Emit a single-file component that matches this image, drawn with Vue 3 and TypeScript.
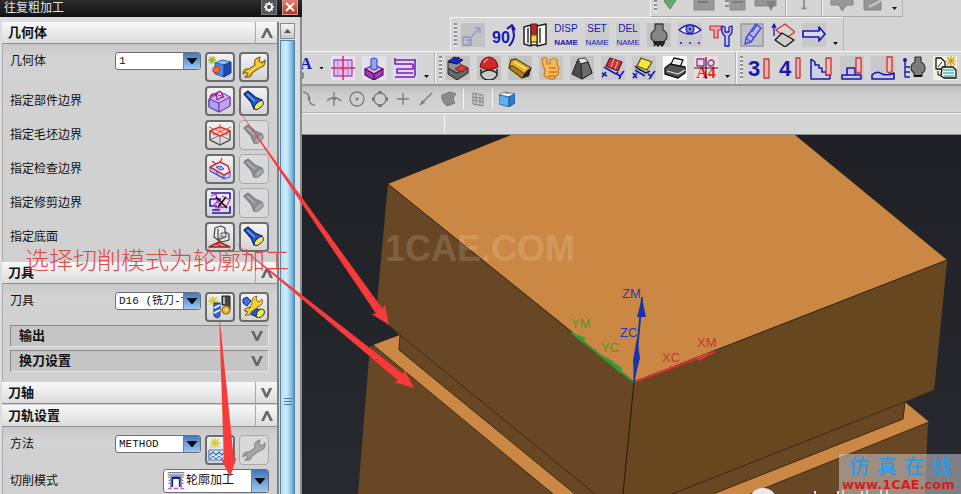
<script setup lang="ts">
import { h, ref } from 'vue'
import type { FunctionalComponent, VNode } from 'vue'

type Shape = () => VNode

const P = (d: string, fill = 'none', stroke = 'none', w = 1): Shape => () =>
  h('path', { d, fill, stroke, 'stroke-width': w, 'stroke-linejoin': 'round' })
const C = (cx: number, cy: number, r: number, fill = 'none', stroke = 'none', w = 1): Shape => () =>
  h('circle', { cx, cy, r, fill, stroke, 'stroke-width': w })
const T = (text: string, x: number, y: number, size: number, fill: string, weight = 400, family = 'Liberation Sans, sans-serif'): Shape => () =>
  h('text', { x, y, fill, 'font-size': size, 'font-weight': weight, 'font-family': family, 'text-anchor': 'middle' }, text)
const bg = (color = '#c3c3c3'): Shape => P('M0 0h24v24H0z', color)

const navy = '#1717b8'
const red = '#d03030'

const torch = (body: string, dark: string, lens: string): Shape[] => [
  P('M2 5L6 2 13 8 20 11 12 20 9 13Z', body, dark, 1.2),
  P('M5 5L13 12', 'none', lens === '#f6ec48' ? '#6fa8ff' : '#b4b7bc', 1.6),
  P('M20 11Q23 15 19 18Q15 22 12 20Q12 17 14 15Q17 12 20 11Z', lens, dark, 1),
]
const wrench = (fill: string, edge: string): Shape[] => [
  P('M13 10Q11 4 18 2L17 6 20 8 23 5Q24 11 17 13L10 18Q9 23 3 22L6 19 4 17 1 19Q1 14 7 14Z', fill, edge, 1.3),
]

const icons: Record<string, Shape[]> = {
  cube: [
    P('M7 8L14 5 23 7 16 10Z', '#8cc0ff', '#2c5fb8'),
    P('M7 8L16 10V22L7 19Z', '#4b8af0', '#2c5fb8'),
    P('M16 10L23 7V18L16 22Z', '#1a4cb4', '#173c90'),
    P('M5 13L10 11 12 14 10 18 5 17Z', '#ef7030', '#b04515'),
    P('M4 1V9M0 5H8M1 2L7 8M7 2L1 8', 'none', '#a4b820', 1.3),
  ],
  wrench: wrench('#f4cf38', '#8a6a10'),
  wrenchOff: wrench('#a6a6a2', '#8f8f8b'),
  torch: torch('#1e57cf', '#12245c', '#f6ec48'),
  torchOff: torch('#8b8f97', '#7b7f86', '#a4a7ac'),
  part: [
    P('M1 10L9 5 12 7 15 4 22 8V17L11 23 1 18Z', '#d6b4f0', '#6a35a8'),
    P('M1 10L11 14V23L1 18Z', '#a9a2f2', '#5538a8'),
    P('M11 14L22 8V17L11 23Z', '#c9a0ee', '#5f38b0'),
    P('M2 9Q3 4 7 5Q9 7 9 11M8 7Q9 2 13 3Q15 5 15 9M3 7L12 2M9 11L16 7', 'none', '#a3209c', 1.4),
  ],
  blank: [
    P('M2 8V17L12 22 22 17V8', 'none', '#333', 1.2),
    P('M12 13V22M2 17L12 12 22 17', 'none', '#777'),
    P('M2 8L12 4 22 8 12 13Z', '#fde6e2', red, 1.4),
    P('M1 4L20 12M23 4L5 12M12 1V9', 'none', '#e05040'),
  ],
  check: [
    P('M2 10V14L16 22 22 20V15', '#c3c8fa', '#5050d0'),
    P('M2 10L12 5 20 9 22 15 16 18Z', '#eceaff', red, 1.5),
    P('M8 10L13 9 16 12 12 13Z', '#92aef8', '#3458cc'),
    P('M9 14V18M16 18V22M2 14L16 21', 'none', '#4848bd'),
    P('M14 1L12 6M4 4L8 7', 'none', red, 1.2),
  ],
  trim: [
    P('M3 2H22V8M2 8H13M2 8V15H9M22 15V22H4M4 19H12', 'none', '#2a16b0', 1.6),
    P('M3 5L8 3 9 10 15 17M14 5L22 9 18 16 7 17M5 15L12 8', 'none', '#d030d8', 1.3),
    P('M8 6L19 17M18 6L10 16', 'none', '#111', 1.7),
  ],
  floor: [
    P('M7 3L13 1 17 3V12L10 15 6 12Z', '#ececec', '#444', 1.2),
    P('M10 4V15M17 7L21 9V15L14 17 10 15', 'none', '#444', 1.2),
    P('M13 8H18V12H13Z', '#c4e0e4', '#557'),
    P('M1 22L11 17 22 22Z', '#e8a8a0', '#a02020', 1.4),
    P('M11 12V22M7 19L16 22', 'none', '#c02020'),
  ],
  toolNew: [
    P('M5 1V11M0 6H10M1 2L9 10M9 2L1 10', 'none', '#d8c830', 1.3),
    P('M6 8H12V21L9 23 6 21Z', '#3468d4', '#1a3070'),
    P('M6 13L12 10M6 18L12 15', 'none', '#fff', 1.8),
    P('M14 1H22V14H18V10H14Z', '#44484e', '#222'),
    P('M16 2V9', 'none', '#b0b4ba', 2),
    C(18, 15, 4, '#e8b830', '#8a6410', 1.2),
    C(18, 15, 1, '#fff'),
  ],
  toolEdit: [
    P('M1 4L5 2 9 6 5 11 1 8Z', '#3c74e0', '#12245c'),
    P('M2 15L8 12 19 15 15 22 8 19Z', '#1e57cf', '#12245c'),
    P('M18 14Q24 14 22 19Q19 24 14 22Q14 17 18 14Z', '#f6ec48', '#12245c'),
    P('M10 8Q9 2 15 1L14 5 17 7 20 4Q22 9 16 12L9 17Q9 21 3 20L6 17 2 15Q4 12 8 13Z', '#f4cf38', '#8a6a10'),
  ],
  method: [
    P('M1 12H23M1 12V22H23V12', '#dce8fa', '#4a72b8', 1.2),
    P('M2 17L5 14 8 17 11 14 14 17 17 14 20 17 23 14', 'none', '#356ac0', 1.2),
    P('M2 21L5 18 8 21 11 18 14 21 17 18 20 21', 'none', '#356ac0'),
    P('M7 0V10M2 5H12M3 1L11 9M11 1L3 9', 'none', '#d8c830', 1.3),
  ],
  profile: [
    P('M1 1H23M1 4H23M2 7H4M20 7H22M2 11H4M20 11H22M2 15H4M20 15H22', 'none', '#55556a', 1.4),
    P('M7 20V8H17V20', 'none', '#202080', 2.4),
    P('M5 22V6H19V22', 'none', '#4848a8', 1),
    P('M1 22H6M9 22H15M18 22H23', 'none', '#d050d0', 2),
  ],
  okMark: [P('M3 13L9 21 21 3 16 1 9 14 6 10Z', '#69a86f', '#4f8756')],
  blockA: [P('M2 4H22V22H2Z', '#989898', '#888'), P('M6 14H16', 'none', '#777', 2)],
  blockB: [P('M7 2H22V22H7Z', '#999', '#888'), P('M2 8H6M2 13H6M2 18H6M10 14H20', 'none', '#777', 1.6)],
  blockC: [P('M1 4H22V18H1Z', '#959595', '#858585'), P('M12 13H22L17 23Z', '#808080')],
  pole: [P('M12 2V22M9 22H15', 'none', '#888', 2)],
  blockD: [P('M1 3H23V17H17L12 23 9 17H1Z', '#979797', '#858585')],
  blockE: [P('M3 2H20V22H3Z', '#949494', '#858585'), P('M8 19L21 12', 'none', '#c4c4c4', 2)],
  scale: [bg('#c2c2c6'), P('M2 14H10V22H2ZM5 17H8V20', 'none', '#9494c4', 1.3), P('M11 13L19 5M14 5H19V10', 'none', '#9494c4', 1.4)],
  rotate90: [T('90', 9, 20, 16, navy, 700), P('M17 23Q25 15 20 4M15 6L20 2 23 7', 'none', navy, 2)],
  book: [
    P('M1 4L8 2V23L1 21ZM8 2H14V22H8ZM14 3L23 1V21L14 23Z', '#f7f7f4', '#222', 1.5),
    P('M8 1H14V11H8Z', '#c42424', '#521'), P('M8 12H14V19H8Z', '#ecd838', '#521'), P('M5 5V20M17 5V20', 'none', '#333', 1.5),
  ],
  disp: [T('DISP', 12, 9, 10, navy), T('NAME', 12, 22, 8, navy, 700)],
  set: [bg('#cbcbcb'), T('SET', 12, 9, 10, navy), T('NAME', 12, 22, 8, navy)],
  del: [bg('#cbcbcb'), T('DEL', 12, 9, 10, navy), T('NAME', 12, 22, 8, navy)],
  holder: [bg(), P('M8 1H16V7Q20 9 20 13Q20 17 17 18V20H7V18Q4 17 4 13Q4 9 8 7Z', '#858585', '#3c3c3c', 1.3), P('M6 19H18M7 23L9 20 11 23 13 20 15 23 17 20', 'none', '#111', 1.4)],
  eye: [bg('#cacaca'), P('M1 7Q12-3 23 7Q12 15 1 7Z', '#f0f0fa', navy, 1.4), C(12, 6, 4, '#7787e0', navy, 1.2), C(12, 6, 1, '#111'), C(3, 20, 1, navy), C(12, 20, 1, navy), C(21, 20, 1, navy)],
  hammer: [P('M1 3H12V7H9V15H5V7H1Z', '#e8a6a6', red, 1.2), P('M13 3V9Q14 12 16 13V23H20V13Q22 12 23 9V3L20 4V9H16V4Z', '#c8c8e4', navy, 1.3)],
  pencil: [P('M1 1H23V23H1Z', '#c2c2c6', '#98989c', 1.4), P('M16 1L21 5 11 19 5 21 6 15Z', '#b8b8ec', '#4848dc', 1.5), P('M6 15L11 19M9 11L14 15M17 2L12 9', 'none', '#4848dc', 1.2)],
  planes: [P('M3 13V2M1 5L3 1 5 5', 'none', navy, 1.3), P('M5 7L14 1 24 9 15 15Z', 'none', red, 1.3), P('M4 17L11 10 23 17 14 24Z', '#ccc', '#111', 1.3)],
  arrow: [bg('#c8c8c8'), P('M1 8H17V4L23 11 17 18V14H1Z', '#d8d8ec', navy, 1.7)],
  fontA: [T('A', 8, 13, 16, navy, 700, 'Liberation Serif, serif'), P('M0 17H5V22H0', '#eee', '#444')],
  grid: [bg('#ecdff2'), P('M3 4H21V20H3Z', '#e2bdf2', '#9b50b8', 1.3), P('M0 12H24M12 0V24', 'none', '#e0204c', 1.4), P('M7 4V20M17 4V20', 'none', '#b080d0')],
  post: [bg('#e4dff0'), P('M3 13L12 9 21 13 12 18Z', '#e4b4e8', '#611878', 1.3), P('M9 3Q12 1 15 3V13Q12 15 9 13Z', '#8fa8f0', '#2c48a8'), P('M3 13L12 18V24L3 19ZM12 18L21 13V19L12 24Z', '#a03cb0', '#4f1064', 1.2)],
  zigzag: [bg('#ded8ea'), P('M2 2V8H20M22 3V20M2 4H22M20 8V13H4V17H20M2 21H22', 'none', '#7420b8', 1.6)],
  step: [bg(), P('M2 12L10 17 22 12V17L11 24 2 18Z', '#686868', '#222'), P('M2 5L13 1V6L16 10 22 12 11 17 2 12Z', '#909090', '#333'), P('M2 6L8 1 17 4 11 8Z', '#1c28bc', '#101860'), P('M9 13L16 9 22 12 15 16Z', '#e03838', '#801818')],
  dome: [bg(), P('M4 13V19Q6 24 12 24Q18 24 20 19V13', '#c8c8c8', '#222', 1.5), P('M4 17Q12 11 20 17', 'none', '#222', 1.4), P('M3 11Q4 2 12 1Q20 2 21 11Q12 16 3 11Z', '#d42626', '#611'), P('M7 7Q8 4 11 3', 'none', '#f6a0a0', 1.4)],
  roll: [bg(), P('M3 4L8 3 23 12 20 20 14 22 1 12Z', '#e4b02c', '#5a4410', 1.3), P('M1 12Q3 9 5 10L17 18 14 22Z', '#b48018', '#4a3608'), P('M15 22Q16 15 23 12L21 20Z', '#222'), P('M6 6L18 13', 'none', '#fae070', 2)],
  thumb: [bg('#c9c5bf'), P('M3 3Q6 0 8 3L8 8H11L11 4Q15 1 18 4V9Q21 11 19 14Q21 18 17 20Q16 24 11 23L5 20 6 14 4 10Z', '#f5b95c', '#c7781c', 1.2), P('M10 12H17M10 16H18M9 20H16', 'none', '#c7781c', 1.3)],
  trapezoid: [bg(), P('M8 3L15 2 18 6 22 17 12 23 2 18Z', '#4c4c4c', '#222'), P('M8 3L15 2 18 6 11 8Z', '#e4e4e4', '#555'), P('M11 8L18 6 22 17 12 23Z', '#6c6c6c', '#222')],
  brushRed: [bg('#c9c9cc'), P('M9 2L21 6 17 15 5 10Z', '#cc3434', '#551818', 1.2), P('M13 3L10 11M17 5L14 13', 'none', '#f0a0a0', 1.2), P('M3 11L15 18 17 16M1 17L6 20M5 16L1 21M16 18L19 20 23 15M20 20L18 23', 'none', navy, 1.6)],
  brushYellow: [bg('#c9c9cc'), P('M9 2L20 6 15 14 5 10Z', '#f2e838', '#514d10', 1.3), P('M3 10L5 12 14 17 18 15', 'none', '#222', 1.5), P('M3 14L13 20M1 17L5 22M5 17L1 22M16 18L19 20 23 15M20 20L17 23', 'none', navy, 1.6)],
  printer: [bg('#fff'), P('M7 10L11 2 20 4 17 11Z', '#fff', '#111', 1.3), P('M2 12L7 8 22 11V17L15 22 2 18Z', '#555', '#111', 1.4), P('M4 15L15 18 22 14M10 5L17 7', 'none', '#ddd', 1.2)],
  a4: [bg('#f0dada'), P('M3 3H10V10H3Z', 'none', '#9030a0', 1.3), C(17, 7, 3, 'none', '#9030a0', 1.3), T('A4', 12, 22, 16, '#f02020', 700, 'Liberation Serif, serif'), P('M0 12H24M12 1V23', 'none', '#222', 1.2)],
  axis3: [T('3', 7, 20, 22, navy, 700), P('M17 3H22V22H17Z', '#dfb6b6', red, 1.3)],
  axis4: [T('4', 7, 20, 22, navy, 700), P('M18 2H22V22H18Z', '#dfb6b6', red, 1.3)],
  stairs: [P('M2 3V23H21M2 3L6 6V9H10V12H13V16H17V19H21V23', '#cfcfdd', navy, 1.5), P('M17 2H22V19H17Z', '#efc0c0', red, 1.3)],
  level: [bg('#c8c8c8'), P('M2 19H21V23H2ZM7 19V12H15V19', '#c8c8dc', navy, 1.6), P('M16 2H21V17H16Z', '#efc0c0', red, 1.3)],
  wave: [bg('#c8c8c8'), P('M1 23V19Q6 14 11 18Q17 20 23 17V23Z', '#c8c8dc', navy, 1.6), P('M16 1H21V15Q18 19 16 15Z', '#efc0c0', red, 1.3)],
  holderTree: [P('M3 4V21H8M3 11H8M3 16H8', 'none', navy, 1.4), C(3, 4, 2, navy), P('M13 1H19V6Q23 8 23 12Q23 16 20 17V20H12V17Q9 15 9 12Q9 8 13 6Z', '#7c7c7c', '#333', 1.2), P('M12 20H20', 'none', '#111', 2)],
  notes: [bg('#f2f0dc'), P('M3 2H8L12 6V13H3Z', '#fff', '#111', 1.3), P('M5 11L9 6M5 15V19H8', 'none', '#111'), P('M18 0V10M13 5H23M14 1L22 9M22 1L14 9', 'none', '#c89c18', 1.2), P('M9 11H20L23 14V22H11L8 20Z', '#dff4f4', '#111', 1.3), P('M10 14H21M10 17H21M11 20H21', 'none', '#2a9090', 1)],
  gear: [
    P('M12 2V6M12 18V22M2 12H6M18 12H22M5 5L8 8M16 16L19 19M19 5L16 8M5 19L8 16', 'none', '#fff', 3.4),
    C(12, 12, 6, 'none', '#fff', 3.4),
  ],
  close: [P('M4 4L20 20M20 4L4 20', 'none', '#fff', 3.6)],
}

const gray = '#7d7d7d'
const snaps: Record<string, Shape[]> = {
  curve: [P('M0 1Q6 2 6 7Q6 14 12 14', 'none', gray, 1.4), C(6, 7, 1.5, gray)],
  cross: [P('M1 10Q8 3 15 10M8 1V15', 'none', gray, 1.4), P('M6 6H10V9H6Z', gray)],
  centre: [C(8, 8, 7, 'none', gray, 1.3), C(8, 8, 1.5, gray)],
  quadrant: [C(8, 8, 6, 'none', gray, 1.3), P('M6 0H10V3H6ZM6 13H10V16H6ZM0 6H3V10H0ZM13 6H16V10H13Z', gray)],
  plus: [P('M2 8H14M8 2V14', 'none', gray, 1.4)],
  line: [P('M2 14L14 2', 'none', gray, 1.5), P('M2 14L4 9 7 12Z', gray)],
  face: [P('M1 4L9 1 15 3Q10 8 14 12L6 15Q0 10 1 4Z', '#8c8c8c', '#777')],
}
const snapGrid: Shape[] = [P('M3 2L13 4V15L3 13ZM6 3V14M10 4V15M3 6L13 8M3 9L13 11', 'none', '#808080', 1)]
const snapCube: Shape[] = [P('M0 4L6 1 16 3 10 6Z', '#f4f8fb', '#777'), P('M0 4L10 6V16L0 13Z', '#61b0ee', '#2c6cb4'), P('M10 6L16 3V12L10 16Z', '#2c7cd4', '#205898'), P('M6 2L10 2', 'none', '#d04040', 1)]

const Icon: FunctionalComponent<{ shapes: Shape[]; box?: number }> = (props) =>
  h('svg', { viewBox: `0 0 ${props.box ?? 24} ${props.box ?? 24}`, 'aria-hidden': 'true' }, props.shapes.map((s) => s()))
Icon.props = ['shapes', 'box']

const boundaries = [
  { label: '指定部件边界', icon: 'part', shown: true },
  { label: '指定毛坯边界', icon: 'blank', shown: false },
  { label: '指定检查边界', icon: 'check', shown: false },
  { label: '指定修剪边界', icon: 'trim', shown: false },
  { label: '指定底面', icon: 'floor', shown: true },
]

const topBar = ['okMark', 'blockA', 'blockB', 'blockC']
const nameBar = ['scale', 'rotate90', 'book', 'disp', 'set', 'del', 'holder', 'eye', 'hammer', 'pencil', 'planes', 'arrow']
const viewBar = ['grid', 'post', 'zigzag']
const millBar = ['step', 'dome', 'roll', 'thumb', 'trapezoid', 'brushRed', 'brushYellow', 'printer', 'a4']
const axisBar = ['axis3', 'axis4', 'stairs', 'level', 'wave', 'holderTree', 'notes']

const geometry = ref('1')
const tool = ref('D16 (铣刀-T)')
const method = ref('METHOD')
const cutMode = ref('轮廓加工')

/* Tapered pointer: hair-thin at its start, widening to the arrow head. */
function pointer(x1: number, y1: number, x2: number, y2: number, shaft: number, head: number): string {
  const len = Math.hypot(x2 - x1, y2 - y1)
  const ux = (x2 - x1) / len
  const uy = (y2 - y1) / len
  const at = (back: number, side: number) => `${(x2 - ux * back - uy * side).toFixed(1)},${(y2 - uy * back + ux * side).toFixed(1)}`
  return [`${x1},${y1}`, at(17, shaft), at(19, head), at(0, 0), at(19, -head), at(17, -shaft)].join(' ')
}
const pointers = [
  pointer(235, 105, 389, 325, 4, 8),
  pointer(233, 241, 414, 388, 4, 8),
  pointer(219, 312, 230, 477, 5, 8),
]
</script>

<template>
  <div class="app">
    <aside class="dialog">
      <header class="title">
        <h1>往复粗加工</h1>
        <button class="cap" aria-label="选项"><Icon :shapes="icons.gear" /></button>
        <button class="cap cap-close" aria-label="关闭"><Icon :shapes="icons.close" /></button>
      </header>
      <div class="dialog-body">
        <div class="sections">
          <section>
            <h2 class="bar"><span>几何体</span><i class="chev up"></i></h2>
            <div class="group">
              <div class="row top">
                <label for="geo">几何体</label>
                <span class="combo"><select id="geo" v-model="geometry"><option>1</option></select><i class="drop"></i></span>
                <button class="tool" aria-label="新建几何体"><Icon :shapes="icons.cube" /></button>
                <button class="tool" aria-label="编辑几何体"><Icon :shapes="icons.wrench" /></button>
              </div>
              <div v-for="b in boundaries" :key="b.label" class="row">
                <span class="label">{{ b.label }}</span>
                <button class="tool" :aria-label="b.label"><Icon :shapes="icons[b.icon]" /></button>
                <button class="tool" :disabled="!b.shown" aria-label="显示"><Icon :shapes="b.shown ? icons.torch : icons.torchOff" /></button>
              </div>
            </div>
          </section>
          <section>
            <h2 class="bar"><span>刀具</span><i class="chev up"></i></h2>
            <div class="group tight">
              <div class="row top">
                <label for="tool">刀具</label>
                <span class="combo"><select id="tool" v-model="tool"><option>D16 (铣刀-T)</option></select><i class="drop"></i></span>
                <button class="tool" aria-label="新建刀具"><Icon :shapes="icons.toolNew" /></button>
                <button class="tool" aria-label="编辑刀具"><Icon :shapes="icons.toolEdit" /></button>
              </div>
              <h3 class="sub"><span>输出</span><i class="chev"></i></h3>
              <h3 class="sub"><span>换刀设置</span><i class="chev"></i></h3>
            </div>
          </section>
          <section class="closed">
            <h2 class="bar"><span>刀轴</span><i class="chev"></i></h2>
          </section>
          <section>
            <h2 class="bar"><span>刀轨设置</span><i class="chev up"></i></h2>
            <div class="group">
              <div class="row top">
                <label for="method">方法</label>
                <span class="combo"><select id="method" v-model="method"><option>METHOD</option></select><i class="drop"></i></span>
                <button class="tool" aria-label="新建方法"><Icon :shapes="icons.method" /></button>
                <button class="tool" disabled aria-label="编辑方法"><Icon :shapes="icons.wrenchOff" /></button>
              </div>
              <div class="row top">
                <label for="cut" class="tall">切削模式</label>
                <span class="combo wide">
                  <Icon :shapes="icons.profile" />
                  <select id="cut" v-model="cutMode"><option>轮廓加工</option></select><i class="drop"></i>
                </span>
              </div>
            </div>
          </section>
        </div>
        <div class="scroll">
          <button class="scroll-up" aria-label="向上滚动"></button>
          <div class="thumb"><i></i></div>
        </div>
      </div>
    </aside>

    <main class="work">
      <div class="strip strip-top">
        <div class="toolbar">
          <i class="grip"></i>
          <button v-for="n in topBar" :key="n" class="ic" :aria-label="n"><Icon :shapes="icons[n]" /></button>
          <i class="sep"></i>
          <button class="ic slim" aria-label="pole"><Icon :shapes="icons.pole" /></button>
          <i class="sep"></i>
          <button class="ic" aria-label="blockD"><Icon :shapes="icons.blockD" /></button>
          <button class="ic" aria-label="blockE"><Icon :shapes="icons.blockE" /></button>
          <i class="caret"></i>
        </div>
      </div>
      <div class="strip strip-names">
        <div class="toolbar">
          <i class="grip"></i>
          <button v-for="n in nameBar" :key="n" class="ic" :aria-label="n"><Icon :shapes="icons[n]" /></button>
          <i class="caret"></i>
        </div>
      </div>
      <div class="strip strip-main">
        <div class="toolbar first">
          <button class="ic narrow" aria-label="fontA"><Icon :shapes="icons.fontA" /></button>
          <i class="caret mid"></i>
          <button v-for="n in viewBar" :key="n" class="ic" :aria-label="n"><Icon :shapes="icons[n]" /></button>
          <i class="caret"></i>
        </div>
        <div class="toolbar">
          <i class="grip"></i>
          <button v-for="n in millBar" :key="n" class="ic" :aria-label="n"><Icon :shapes="icons[n]" /></button>
          <i class="caret"></i>
        </div>
        <div class="toolbar last">
          <i class="grip"></i>
          <button v-for="n in axisBar" :key="n" class="ic" :aria-label="n"><Icon :shapes="icons[n]" /></button>
        </div>
      </div>
      <div class="snapbar">
        <button v-for="(s, n) in snaps" :key="n" class="ic small" :aria-label="String(n)"><Icon :shapes="s" :box="16" /></button>
        <i class="sep"></i>
        <button class="ic small" aria-label="snapGrid"><Icon :shapes="snapGrid" :box="16" /></button>
        <i class="sep"></i>
        <button class="ic small" aria-label="snapCube"><Icon :shapes="snapCube" :box="16" /></button>
      </div>
      <div class="prompt"><span></span><span></span></div>

      <div class="viewport">
        <svg class="scene" viewBox="302 135 659 359" preserveAspectRatio="xMinYMin slice">
          <defs>
            <linearGradient id="sky" x1="0" y1="0" x2="0" y2="1">
              <stop offset="0" stop-color="#1f2126" /><stop offset="1" stop-color="#272930" />
            </linearGradient>
          </defs>
          <rect x="302" y="135" width="659" height="359" fill="url(#sky)" />
          <polygon points="370,346 634,382 928,421 925,494 358,494" fill="#684725" />
          <polygon points="373,345 400,335 575,494 553,494" fill="#cb8844" />
          <polygon points="905,402 929,422 750,494 713,494" fill="#cb8844" />
          <polygon points="400,335 399,350 575,494 713,494 903,419 905,402 634,382" fill="#684725" />
          <polygon points="388,184 376,313 400,335 595,494 672,494 934,390 947,260 634,382" fill="#684725" />
          <polygon points="634,382 947,260 934,390 672,494 623,494" fill="#66471f" />
          <polygon points="388,184 511,135 795,135 947,260 634,382" fill="#cb8844" />
          <g fill="none" stroke="#3c2913" stroke-width="1">
            <path d="M388 184L634 382 947 260" stroke="#302010" />
            <path d="M634 382L623 494" stroke="#251a0c" />
            <path d="M400 335L595 494M672 494L905 402" />
            <path d="M400 335L399 350 575 494M373 345L553 494" />
            <path d="M905 402L903 419 713 494M929 422L750 494M934 390L905 402" />
          </g>
          <g stroke-linecap="round">
            <path d="M572 333L634 382" stroke="#2f9c32" stroke-width="2" />
            <path d="M572 333L586 338 583 342ZM602 354L622 368 620 374Z" fill="#2ca032" />
            <path d="M634 382L714 352" stroke="#c93434" stroke-width="2" />
            <path d="M655 375L671 366 677 366ZM696 357L716 351 699 361Z" fill="#d83a3a" />
            <path d="M634 382L642 298" stroke="#1834ac" stroke-width="2" />
            <path d="M642 298L646 317 637 317ZM637 338L640 358 634 382 633 360Z" fill="#1834ac" />
          </g>
          <g class="axis">
            <text x="622" y="298" fill="#2c3cb0">ZM</text>
            <text x="620" y="337" fill="#2c3cb0">ZC</text>
            <text x="571" y="328" fill="#4c9a2c">YM</text>
            <text x="601" y="352" fill="#4c9a2c">YC</text>
            <text x="662" y="362" fill="#c23a2c">XC</text>
            <text x="697" y="347" fill="#c23a2c">XM</text>
          </g>
          <text class="mark" x="385" y="261">1CAE.COM</text>
          <circle cx="763" cy="502" r="14" fill="#eceae6" />
          <path d="M815 491V494M838 491V494M843 490V494M862 491V494M867 490V494M881 490V494M887 490V494" stroke="#e4ddd4" stroke-width="2" />
        </svg>
        <div class="brand">
          <div class="brand-cn"><span>仿</span><span>真</span><span>在</span><span>线</span></div>
          <div class="brand-url">www.1CAE.com</div>
        </div>
      </div>
    </main>

    <svg class="pointers" viewBox="0 0 961 494" aria-hidden="true">
      <polygon v-for="p in pointers" :key="p" :points="p" />
    </svg>
    <p class="note">选择切削模式为轮廓加工</p>
  </div>
</template>

<style>
body {
  overflow: hidden;
}
</style>

<style scoped>
* {
  box-sizing: border-box;
}
.app {
  position: relative;
  display: flex;
  height: 100vh;
  overflow: hidden;
  font-family: "Liberation Sans", "Noto Sans CJK SC", sans-serif;
  font-size: 12px;
  color: #111;
}
h1, h2, h3, p {
  margin: 0;
  font-size: 12px;
  font-weight: 400;
}
button {
  padding: 0;
  border: 0;
  background: none;
}
svg {
  display: block;
}

.dialog {
  display: flex;
  flex: none;
  flex-direction: column;
  width: 302px;
  background: #dcdde0;
  border-right: 2px solid #8c8c90;
}
.title {
  display: flex;
  flex: none;
  align-items: flex-start;
  gap: 5px;
  height: 17px;
  margin-right: -2px;
  padding: 0 4px;
  background: linear-gradient(#2c2c2c, #111);
}
.title h1 {
  flex: 1;
  color: #e2e2e2;
  line-height: 16px;
}
.cap {
  width: 16px;
  height: 15px;
  padding: 1px;
  background: #55575b;
  border: 1px solid #77797c;
  border-top: 0;
}
.cap svg {
  width: 100%;
  height: 100%;
}
.cap-close {
  background: linear-gradient(#e08074, #c03420);
  border-color: #d89a90;
}
.dialog-body {
  display: flex;
  flex: 1;
  min-height: 0;
  padding: 5px 4px 0 2px;
}
.sections {
  flex: 1;
  min-width: 0;
  background: #d0d0d0;
  border-right: 2px solid #808080;
}
.bar {
  display: flex;
  align-items: center;
  height: 22px;
  padding-left: 6px;
  background: linear-gradient(#f8f8f8, #dcdcdc);
  border-bottom: 1px solid #909090;
}
.bar span,
.sub span {
  flex: 1;
  font-size: 13px;
  font-weight: 700;
  line-height: 18px;
}
.bar .chev {
  width: 22px;
  border-left: 1px solid #aaa;
}
.chev {
  display: flex;
  align-items: center;
  justify-content: center;
  align-self: stretch;
  width: 22px;
}
.chev::after {
  content: "";
  width: 12px;
  height: 10px;
  background: #666;
  clip-path: polygon(0 0, 25% 0, 50% 65%, 75% 0, 100% 0, 60% 100%, 40% 100%);
}
.chev.up::after {
  transform: rotate(180deg);
}
.closed {
  margin-bottom: 1px;
}
.group {
  display: flex;
  flex-direction: column;
  gap: 4px;
  padding: 8px 8px 10px 7px;
  border-left: 1px solid #aaa;
  background: linear-gradient(#c8c8c8, #d2d2d2 12px, #d0d0d0);
}
.group.tight {
  gap: 3px;
}
.row {
  display: flex;
  align-items: center;
  gap: 4px;
}
.row.top {
  align-items: flex-start;
}
.row label,
.label {
  flex: 1;
  line-height: 18px;
}
.row .tall {
  line-height: 24px;
}
.combo {
  display: flex;
  width: 86px;
  height: 18px;
  overflow: hidden;
  background: #fff;
  border: 1px solid #6a6e78;
  border-radius: 3px;
}
.combo select {
  flex: 1;
  min-width: 0;
  padding: 0 0 0 3px;
  appearance: none;
  border: 0;
  background: none;
  color: #111;
  font: 11px "Liberation Mono", "Noto Sans CJK SC", monospace;
  text-overflow: clip;
}
.drop {
  display: flex;
  align-items: center;
  justify-content: center;
  width: 17px;
  background: linear-gradient(#3f78bc, #9cc8f0);
  border-left: 1px solid #5a86b8;
}
.drop::after {
  content: "";
  width: 12px;
  height: 7px;
  background: #0a0a14;
  clip-path: polygon(0 0, 100% 0, 50% 100%);
}
.combo.wide {
  align-items: stretch;
  width: 106px;
  height: 24px;
}
.combo.wide svg {
  width: 18px;
  height: 18px;
  margin: 2px 0 0 3px;
}
.combo.wide select {
  padding-left: 1px;
  font-size: 12px;
}
.tool {
  display: grid;
  flex: none;
  place-items: center;
  width: 30px;
  height: 30px;
  background: linear-gradient(#f2f2f2, #d4d4d6);
  border: 2px solid #6c6c70;
  border-radius: 4px;
}
.tool:disabled {
  background: #d9d9d9;
  border: 1px solid #a8a8a8;
}
.tool svg {
  width: 24px;
  height: 24px;
}
.sub {
  display: flex;
  align-items: center;
  height: 22px;
  padding-left: 8px;
  background: #c5c5c5;
  border: 1px solid #8a8a8a;
  border-right-color: #e4e4e4;
  border-bottom-color: #e4e4e4;
}

.scroll {
  display: flex;
  flex: none;
  flex-direction: column;
  gap: 1px;
  width: 17px;
  padding: 1px 1px 0 1px;
}
.scroll-up {
  display: grid;
  place-items: center;
  height: 16px;
  background: linear-gradient(#f4f4f4, #c8c8c8);
  border: 1px solid #8c8c8c;
}
.scroll-up::after {
  content: "";
  width: 7px;
  height: 4px;
  background: #555;
  clip-path: polygon(50% 0, 100% 100%, 0 100%);
}
.thumb {
  display: grid;
  flex: 1;
  place-items: center;
  align-content: end;
  background: linear-gradient(90deg, #b6dcf2, #cfeeff 40%, #84bfe2 80%, #5a98c0);
  border: 1px solid #5386a8;
  border-bottom: 0;
}
.thumb i {
  width: 8px;
  height: 8px;
  margin-bottom: 88px;
  background: repeating-linear-gradient(#467c9c 0 1px, transparent 1px 3px);
}

.work {
  display: flex;
  flex: 1;
  flex-direction: column;
  min-width: 0;
  background: #d5d5d5;
}
.strip {
  display: flex;
  flex: none;
  overflow: hidden;
}
.strip-top {
  align-items: flex-end;
  height: 17px;
  padding-left: 348px;
}
.strip-names {
  height: 34px;
  padding-left: 148px;
}
.strip-main {
  height: 35px;
  border-bottom: 2px solid #969696;
}
.toolbar {
  display: flex;
  flex: none;
  align-items: center;
  gap: 7px;
  padding: 0 5px 0 3px;
  border-top: 1px solid #f6f6f6;
  border-left: 1px solid #f6f6f6;
  border-right: 1px solid #b4b4b4;
}
.strip-top .toolbar {
  height: 34px;
  border-bottom: 1px solid #aaa;
}
.toolbar.first {
  padding-left: 0;
  border-left: 0;
}
.toolbar.last {
  flex: 1;
}
.grip {
  width: 3px;
  height: 24px;
  margin-right: -3px;
  background: repeating-linear-gradient(#8e8e8e 0 2px, #e8e8e8 2px 4px);
}
.sep {
  align-self: stretch;
  width: 2px;
  background: #a8a8a8;
  border-right: 1px solid #f4f4f4;
}
.caret {
  align-self: flex-end;
  width: 5px;
  height: 3px;
  margin-bottom: 6px;
  background: #111;
  clip-path: polygon(0 0, 100% 0, 50% 100%);
}
.caret.mid {
  align-self: center;
  margin: 0;
}
.ic {
  flex: none;
  width: 24px;
  height: 24px;
}
.ic svg {
  width: 100%;
  height: 100%;
}
.ic.slim {
  width: 20px;
}
.ic.narrow {
  width: 10px;
  overflow: hidden;
}
.ic.narrow svg {
  width: 24px;
  margin-left: -4px;
}
.ic.small {
  width: 16px;
  height: 16px;
}
.snapbar {
  display: flex;
  flex: none;
  align-items: center;
  gap: 7px;
  height: 27px;
  padding-left: 1px;
  background: linear-gradient(#bebebe, #cdcdcd 8px, #d4d4d4);
  border-bottom: 1px solid #b0b0b0;
}
.snapbar .sep {
  width: 1px;
  margin: 3px -1px;
  border-right: 0;
  background: #f4f4f4;
}
.prompt {
  display: flex;
  flex: none;
  height: 22px;
  border-top: 1px solid #f4f4f4;
  border-bottom: 1px solid #8e8e8e;
}
.prompt span:first-child {
  width: 143px;
  border-right: 1px solid #f6f6f6;
}

.viewport {
  position: relative;
  flex: 1;
  min-height: 0;
  overflow: hidden;
}
.scene {
  width: 100%;
  height: 100%;
}
.axis text {
  font: 13px "Liberation Sans", sans-serif;
}
.mark {
  fill: rgba(255, 240, 220, 0.18);
  font: 700 36px "Liberation Sans", sans-serif;
}
.brand {
  position: absolute;
  right: 0;
  bottom: 0;
  width: 122px;
  height: 40px;
  padding: 3px 0 0 3px;
  background: rgba(200, 200, 205, 0.55);
}
.brand-cn {
  display: flex;
  justify-content: space-between;
  padding: 0 9px 0 7px;
  color: #2a9ae8;
  font-size: 20px;
  font-weight: 500;
  line-height: 20px;
}
.brand-url {
  color: #d4201c;
  font: 700 13px/16px "DejaVu Sans", sans-serif;
}

.pointers {
  position: absolute;
  top: 0;
  left: 0;
  width: 961px;
  height: 494px;
  fill: #f83a3a;
  pointer-events: none;
}
.note {
  position: absolute;
  top: 246px;
  left: 25px;
  color: #e04848;
  font-size: 24px;
  font-weight: 300;
  line-height: 30px;
  white-space: nowrap;
  pointer-events: none;
}
</style>
